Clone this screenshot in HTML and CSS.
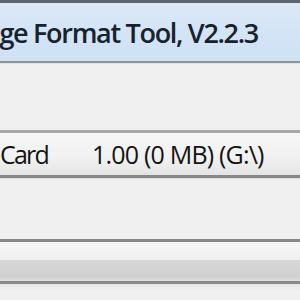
FILE: index.html
```html
<!DOCTYPE html>
<html>
<head>
<meta charset="utf-8">
<link rel="stylesheet" href="styles.css">
</head>
<body>
<div class="window">
  <div class="frame-top"></div>
  <div class="titlebar">
    <span class="title">HP USB Disk Storage Format Tool, V2.2.3</span>
  </div>
  <div class="title-edge"></div>
  <div class="gap-a"></div>
  <div class="combo">
    <span class="dev">Card</span>
    <span class="size">1.00 (0 MB) (G:\)</span>
  </div>
  <div class="gap-b"></div>
  <div class="combo2">
    <div class="c2-hi"></div>
    <div class="c2-lo"></div>
  </div>
  <div class="tail"></div>
</div>
</body>
</html>
```

FILE: styles.css
```css
html, body {
  margin: 0;
  padding: 0;
  background: #f0f0f0;
}
.window {
  width: 300px;
  height: 300px;
  overflow: hidden;
  display: flex;
  flex-direction: column;
  font-family: "Open Sans", "Noto Sans", sans-serif;
}
.frame-top {
  height: 3px;
  background: #5d646c;
  flex: none;
}
.titlebar {
  height: 58px;
  flex: none;
  background: linear-gradient(#dce9f6, #d3e4f5 50%, #cfe1f3);
  display: flex;
  align-items: center;
  justify-content: flex-end;
  padding-right: 42px;
  white-space: nowrap;
  overflow: hidden;
}
.title {
  font-size: 27px;
  font-weight: 600;
  color: #17222e;
  letter-spacing: -1.3px;
  flex: none;
}
.title-edge {
  height: 2px;
  flex: none;
  background: #8d949b;
  border-bottom: 1px solid #e2e2e2;
}
.gap-a {
  height: 66px;
  flex: none;
}
.combo {
  height: 42px;
  flex: none;
  border-top: 3px solid #a8a8a8;
  border-bottom: 3px solid #868686;
  background: linear-gradient(#f6f6f6, #f1f1f1 60%, #e4e4e4);
  display: flex;
  align-items: center;
  white-space: nowrap;
  font-size: 25px;
  color: #141414;
}
.dev {
  width: 92px;
  flex: none;
  letter-spacing: -1.8px;
}
.size {
  letter-spacing: -0.8px;
}
.gap-b {
  height: 60px;
  flex: none;
  border-top: 1px solid #dcdcdc;
}
.combo2 {
  flex: none;
  border-top: 3px solid #888888;
  border-bottom: 3px solid #8a8a8a;
  display: flex;
  flex-direction: column;
}
.c2-hi {
  height: 18px;
  background: linear-gradient(#f7f7f7, #f0f0f0);
}
.c2-lo {
  height: 21px;
  background: linear-gradient(#d8d8d8, #d0d0d0 80%, #dedede);
}
.tail {
  flex: 1;
  background: linear-gradient(#e6e6e6, #f0f0f0 6px);
}
```
